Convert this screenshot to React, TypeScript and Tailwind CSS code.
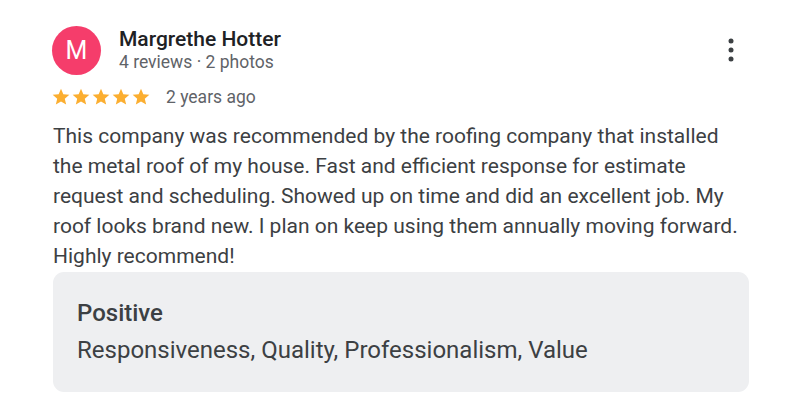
function Star() {
  return (
    <svg viewBox="0 0 24 24" className="w-[20px] h-[20px]" fill="#fbae30">
      <path d="M12 17.27L18.18 21l-1.64-7.03L22 9.24l-7.19-.61L12 2 9.19 8.63 2 9.24l5.46 4.73L5.82 21z" />
    </svg>
  );
}

const body = [
  "This company was recommended by the roofing company that installed",
  "the metal roof of my house. Fast and efficient response for estimate",
  "request and scheduling. Showed up on time and did an excellent job. My",
  "roof looks brand new. I plan on keep using them annually moving forward.",
  "Highly recommend!",
];

export default function App() {
  return (
    <div className="w-[790px] h-[418px] bg-white pl-[53px] pr-[41px] pt-[26px] font-[Roboto,'Liberation_Sans',sans-serif]">
      <div className="flex items-start h-[49px]">
        <div className="w-[49px] h-[49px] -ml-[1px] rounded-full bg-[#f53d6b] flex items-center justify-center text-white text-[25px] leading-none shrink-0">
          M
        </div>
        <div className="ml-[18px] pt-[1px] flex-1">
          <div className="text-[21px] leading-[24px] font-medium text-[#202124]">
            Margrethe Hotter
          </div>
          <div className="text-[17.5px] leading-[22px] text-[#5f6368]">
            4 reviews · 2 photos
          </div>
        </div>
        <svg viewBox="0 0 6 24" className="w-[6px] h-[24px] mt-[12px] mr-[15px]" fill="#3c4043">
          <circle cx="3" cy="3" r="2.5" />
          <circle cx="3" cy="12" r="2.5" />
          <circle cx="3" cy="21" r="2.5" />
        </svg>
      </div>

      <div className="flex items-center h-[20px] mt-[12px]">
        <div className="flex -ml-[2px]">
          <Star />
          <Star />
          <Star />
          <Star />
          <Star />
        </div>
        <span className="ml-[15px] text-[17.5px] leading-[20px] text-[#5f6368]">
          2 years ago
        </span>
      </div>

      <p className="mt-[14px] text-[21px] leading-[30px] text-[#3c4043]">
        {body.map((line, i) => (
          <span key={i} className="block whitespace-nowrap">
            {line}
          </span>
        ))}
      </p>

      <div className="mt-[1px] h-[120px] rounded-[11px] bg-[#eeeff1] px-[24px] pt-[23px] text-[24px] text-[#3c4043]">
        <div className="font-medium leading-[36px]">Positive</div>
        <div className="leading-[39px]">Responsiveness, Quality, Professionalism, Value</div>
      </div>
    </div>
  );
}
